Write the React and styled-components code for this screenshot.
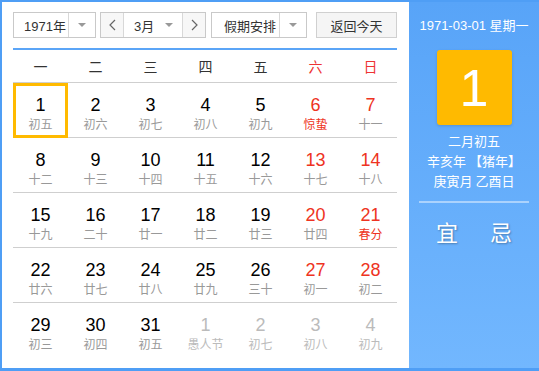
import React from 'react';
import styled, { createGlobalStyle } from 'styled-components';

const Global = createGlobalStyle`
  html, body { margin: 0; padding: 0; background: #fff; }
  body { font-family: "Liberation Sans", "Noto Sans CJK SC", Arial, sans-serif; }
`;

const Frame = styled.div`
  width: 539px;
  height: 371px;
  box-sizing: border-box;
  border: 2px solid #4f9ef5;
  border-right: none;
  border-bottom-width: 3px;
  display: flex;
`;

const Main = styled.div`
  width: 407px;
  box-sizing: border-box;
  padding: 10px 12px 0 11px;
  background: #fff;
`;

const Toolbar = styled.div`
  display: flex;
  align-items: center;
  height: 26px;
  margin-bottom: 10px;
`;

const Select = styled.div`
  display: flex;
  align-items: stretch;
  height: 24px;
  width: ${p => p.w}px;
  margin-right: ${p => p.mr || 0}px;
  border: 1px solid #c9c9c9;
  box-sizing: content-box;
  font-size: 13px;
  color: #333;
  background: #fff;
`;

const SelectText = styled.div`
  flex: 1;
  display: flex;
  align-items: center;
  padding-left: ${p => p.pl || 10}px;
`;

const Arrow = styled.div`
  width: 26px;
  display: flex;
  align-items: center;
  justify-content: center;
  border-left: ${p => (p.line ? '1px solid #d8d8d8' : 'none')};
  &::after {
    content: '';
    border-left: 4px solid transparent;
    border-right: 4px solid transparent;
    border-top: 4px solid #999;
  }
`;

const Step = styled.div`
  width: 22px;
  display: flex;
  align-items: center;
  justify-content: center;
  background: #f7f7f7;
  border-${p => p.side}: 1px solid #d8d8d8;
`;

const TodayBtn = styled.div`
  margin-left: auto;
  width: 79px;
  height: 24px;
  border: 1px solid #d0d0d0;
  background: #f5f5f5;
  display: flex;
  align-items: center;
  justify-content: center;
  font-size: 13px;
  color: #333;
`;

const Head = styled.div`
  display: grid;
  grid-template-columns: repeat(7, 55px);
  border-top: 2px solid #5ba5f7;
  height: 32px;
  align-items: center;
  border-bottom: 1px solid #cfcfcf;
`;

const Weekday = styled.div`
  text-align: center;
  font-size: 14px;
  color: ${p => (p.red ? '#e33' : '#333')};
  font-family: "Noto Sans CJK SC", sans-serif;
`;

const Row = styled.div`
  display: grid;
  grid-template-columns: repeat(7, 55px);
  height: 54px;
  border-bottom: ${p => (p.last ? 'none' : '1px solid #cfcfcf')};
`;

const Cell = styled.div`
  box-sizing: border-box;
  display: flex;
  flex-direction: column;
  align-items: center;
  padding-top: ${p => (p.sel ? '9px' : '12px')};
  border: ${p => (p.sel ? '3px solid #ffba00' : 'none')};
  margin: ${p => (p.sel ? '0 0 -1px 0' : '0')};
  height: ${p => (p.sel ? '55px' : '54px')};
`;

const Num = styled.div`
  font-size: 18px;
  line-height: 20px;
  color: ${p => (p.other ? '#bbb' : p.red ? '#e32' : '#000')};
`;

const Lunar = styled.div`
  font-size: 12px;
  line-height: 16px;
  margin-top: 1px;
  font-family: "Noto Sans CJK SC", sans-serif;
  color: ${p => (p.other ? '#bbb' : p.red ? '#e32' : '#999')};
`;

const Side = styled.div`
  flex: 1;
  background: linear-gradient(#58a4f8, #72b7fe);
  display: flex;
  flex-direction: column;
  align-items: center;
  color: #fff;
  font-family: "Liberation Sans", "Noto Sans CJK SC", sans-serif;
`;

const SideDate = styled.div`
  font-size: 13px;
  margin-top: 15px;
  line-height: 18px;
`;

const BigDay = styled.div`
  margin-top: 15px;
  width: 75px;
  height: 75px;
  border-radius: 3px;
  background: #ffba00;
  box-shadow: 0 1px 3px rgba(0, 0, 0, 0.15);
  display: flex;
  align-items: center;
  justify-content: center;
  font-size: 52px;
  line-height: 1;
`;

const Info = styled.div`
  margin-top: 6px;
  font-size: 13px;
  line-height: 20px;
  text-align: center;
  font-family: "Noto Sans CJK SC", sans-serif;
`;

const Divider = styled.div`
  width: 110px;
  height: 2px;
  background: rgba(255, 255, 255, 0.45);
  margin-top: 10px;
`;

const Pair = styled.div`
  display: flex;
  gap: 32px;
  margin-top: 12px;
  font-size: 22px;
  font-family: "Noto Sans CJK SC", sans-serif;
  text-shadow: 1px 1px 2px rgba(0, 0, 0, 0.3);
`;

const Chevron = ({ dir }) => (
  <svg width="7" height="12" viewBox="0 0 7 12">
    <path
      d={dir === 'left' ? 'M6 1 L1 6 L6 11' : 'M1 1 L6 6 L1 11'}
      fill="none"
      stroke="#666"
      strokeWidth="1.2"
    />
  </svg>
);

const weekdays = ['一', '二', '三', '四', '五', '六', '日'];

const rows = [
  [['1', '初五'], ['2', '初六'], ['3', '初七'], ['4', '初八'], ['5', '初九'], ['6', '惊蛰', 1], ['7', '十一']],
  [['8', '十二'], ['9', '十三'], ['10', '十四'], ['11', '十五'], ['12', '十六'], ['13', '十七'], ['14', '十八']],
  [['15', '十九'], ['16', '二十'], ['17', '廿一'], ['18', '廿二'], ['19', '廿三'], ['20', '廿四'], ['21', '春分', 1]],
  [['22', '廿六'], ['23', '廿七'], ['24', '廿八'], ['25', '廿九'], ['26', '三十'], ['27', '初一'], ['28', '初二']],
  [['29', '初三'], ['30', '初四'], ['31', '初五'], ['1', '愚人节', 0, 1], ['2', '初七', 0, 1], ['3', '初八', 0, 1], ['4', '初九', 0, 1]],
];

export default function App() {
  return (
    <>
      <Global />
      <Frame>
        <Main>
          <Toolbar>
            <Select w={81} mr={4}>
              <SelectText pl={10}>1971年</SelectText>
              <Arrow line />
            </Select>
            <Select w={104} mr={5}>
              <Step side="right"><Chevron dir="left" /></Step>
              <SelectText pl={10}>3月</SelectText>
              <Arrow />
              <Step side="left"><Chevron dir="right" /></Step>
            </Select>
            <Select w={94}>
              <SelectText pl={12}>假期安排</SelectText>
              <Arrow line />
            </Select>
            <TodayBtn>返回今天</TodayBtn>
          </Toolbar>
          <Head>
            {weekdays.map((d, i) => (
              <Weekday key={d} red={i > 4}>{d}</Weekday>
            ))}
          </Head>
          {rows.map((r, ri) => (
            <Row key={ri} last={ri === rows.length - 1}>
              {r.map(([n, l, festRed, other], ci) => (
                <Cell key={ci} sel={ri === 0 && ci === 0}>
                  <Num red={ci > 4} other={other}>{n}</Num>
                  <Lunar red={festRed} other={other}>{l}</Lunar>
                </Cell>
              ))}
            </Row>
          ))}
        </Main>
        <Side>
          <SideDate>1971-03-01 星期一</SideDate>
          <BigDay>1</BigDay>
          <Info>
            二月初五<br />
            辛亥年 【猪年】<br />
            庚寅月 乙酉日
          </Info>
          <Divider />
          <Pair>
            <span>宜</span>
            <span>忌</span>
          </Pair>
        </Side>
      </Frame>
    </>
  );
}
